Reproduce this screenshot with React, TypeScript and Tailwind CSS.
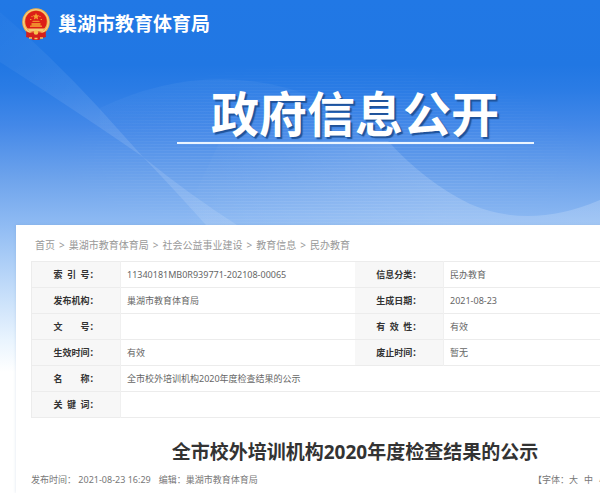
type InfoCell = {
  label: string;
  value: string;
};

// full-width colon
const COLON = "\uff1a";

const breadcrumbs = ["首页", "巢湖市教育体育局", "社会公益事业建设", "教育信息", "民办教育"];

const infoRows: InfoCell[][] = [
  [
    { label: "索 引 号", value: "11340181MB0R939771-202108-00065" },
    { label: "信息分类", value: "民办教育" },
  ],
  [
    { label: "发布机构", value: "巢湖市教育体育局" },
    { label: "生成日期", value: "2021-08-23" },
  ],
  [
    { label: "文 号", value: "" },
    { label: "有 效 性", value: "有效" },
  ],
  [
    { label: "生效时间", value: "有效" },
    { label: "废止时间", value: "暂无" },
  ],
  [{ label: "名 称", value: "全市校外培训机构2020年度检查结果的公示" }],
  [{ label: "关 键 词", value: "" }],
];

const Emblem = () => (
  <svg aria-hidden="true" className="h-8 w-7" viewBox="0 0 28 32">
    <path d="M5 23h18l1 6-4 1-3 2h-6l-3-2-4-1Z" fill="#d4201c" />
    <circle cx="14" cy="14" fill="#f3b04a" r="13.8" />
    <circle cx="14" cy="14" fill="none" r="12.4" stroke="#f8d48c" />
    <circle cx="14" cy="13.5" fill="#dc1f17" r="10.8" />
    <path d="m14 5 1 2.2 2.4.3-1.8 1.6.5 2.4-2.1-1.2-2.1 1.2.5-2.4-1.8-1.6 2.4-.3Z" fill="#f6a032" />
    <path d="M8 11.5h1.4M18.6 11.5H20M9.4 8.6h1.2M17.4 8.6h1.2" stroke="#f6a032" />
    <path d="M8 17.5h1.5V15h9v2.5H20V19H8ZM10 14l1-1.3h6l1 1.3Z" fill="#f08a2c" />
    <path d="M5.5 20.5h17l-2 3h-13Z" fill="#f6c872" />
    <path d="M4 23c3 3 6 1 10 1s7 2 10-1l-1 6c-4 1-6-1-9-1s-5 2-9 1Z" fill="#d4201c" />
    <circle cx="14" cy="24.5" fill="#f6c24c" r="2.3" />
    <path d="M7 30h3M12.5 30.5h3M18 30h3" stroke="#f7c65a" strokeWidth="1.6" />
  </svg>
);

const BannerArt = () => (
  <svg
    aria-hidden="true"
    className="absolute inset-0 h-full w-full"
    preserveAspectRatio="xMinYMin slice"
    viewBox="0 0 710 225"
  >
    <defs>
      <pattern height="3" id="lines" patternUnits="userSpaceOnUse" width="8">
        <path d="M0 .5h8" stroke="#fff" strokeOpacity=".07" />
      </pattern>
      <radialGradient id="fade">
        <stop offset=".5" stopColor="#fff" />
        <stop offset="1" stopColor="#000" />
      </radialGradient>
      <mask id="linesMask">
        <ellipse cx="330" cy="160" fill="url(#fade)" rx="270" ry="100" />
      </mask>
      <linearGradient id="wave" x1="0" x2="1" y1="0" y2="0">
        <stop offset="0" stopColor="#fff" stopOpacity="0" />
        <stop offset=".5" stopColor="#fff" stopOpacity=".16" />
        <stop offset="1" stopColor="#fff" stopOpacity=".2" />
      </linearGradient>
      <linearGradient id="arc" x1="0" x2="0" y1="0" y2="1">
        <stop offset="0" stopColor="#fff" stopOpacity=".05" />
        <stop offset="1" stopColor="#fff" stopOpacity="0" />
      </linearGradient>
      <linearGradient id="beam" x1="0" x2="1" y1="0" y2="1">
        <stop offset="0" stopColor="#fff" stopOpacity=".02" />
        <stop offset=".6" stopColor="#fff" stopOpacity=".12" />
        <stop offset="1" stopColor="#fff" stopOpacity=".12" />
      </linearGradient>
    </defs>
    <path d="M0 60H710V225H0Z" fill="url(#lines)" mask="url(#linesMask)" />
    <path d="M100 108Q200 60 300 92Q350 108 388 141H100Z" fill="url(#arc)" />
    <path d="M0 12Q50 55 98 107L143 157Q190 195 237 225H206Q170 185 143 157Q90 120 0 62Z" fill="url(#beam)" />
    <path
      d="M220 141H388Q425 182 470 204Q530 230 600 200Q660 175 710 130V225H180Z"
      fill="url(#wave)"
    />
  </svg>
);

const App = () => {
  return (
    <div className="flex min-h-screen flex-col overflow-hidden bg-white bg-[linear-gradient(to_bottom,#2178e5_0px,#2177e3_65px,#2b7ce5_90px,#4388e8_125px,#6fa4ec_180px,#8fbbf3_225px,#bfdaf9_285px,#e9f4fe_340px,#ffffff_372px)] bg-no-repeat font-['Noto_Sans','Noto_Sans_CJK_SC',sans-serif]">
      <div className="flex min-w-[710px] flex-1 flex-col">
        <header className="relative h-[225px]">
          <BannerArt />
          <div className="relative flex items-center gap-2 px-[22px] pt-2 text-white">
            <Emblem />
            <span className="text-[19px] leading-8 font-bold">巢湖市教育体育局</span>
          </div>
          <div className="relative mx-auto mt-11 w-[357px] border-b-2 border-[#eaf4ff] text-center">
            <h1 className="pb-1 font-['Noto_Sans_CJK_SC',sans-serif] text-[48px] leading-[54px] font-bold whitespace-nowrap text-white [text-shadow:2px_2px_1px_#1f5299]">
              政府信息公开
            </h1>
          </div>
        </header>

        <main className="mx-4 flex-1 bg-white px-[15px] pb-1 shadow-[0_0_3px_rgba(80,120,170,0.2)]">
          <nav aria-label="当前位置" className="px-1 pt-3">
            <ol className="flex text-[10px] leading-4 text-[#999]">
              {breadcrumbs.map((item, index) => (
                <li key={item}>
                  {index > 0 && <span className="px-1">&gt;</span>}
                  <a href="#">{item}</a>
                </li>
              ))}
            </ol>
          </nav>

          <table className="mt-2 w-full table-fixed border-collapse border border-[#ececec] text-[9px] leading-4 text-[#666]">
            <colgroup>
              <col className="w-[89px]" />
              <col className="w-[234px]" />
              <col className="w-[89px]" />
              <col />
            </colgroup>
            <tbody>
              {infoRows.map((row) => (
                <tr className="h-[26px] border-b border-[#ececec]" key={row[0].label}>
                  {row.map((cell) => [
                    <th
                      className="border-r border-[#f0f0f0] bg-[#f7f7f7] font-bold whitespace-nowrap text-[#333]"
                      key={cell.label}
                      scope="row"
                    >
                      <span className="inline-block w-9 [text-align-last:justify]">
                        {cell.label}
                      </span>
                      {COLON}
                    </th>,
                    <td
                      className="px-1.5"
                      colSpan={row.length === 1 ? 3 : 1}
                      key={`${cell.label}-value`}
                    >
                      {cell.value}
                    </td>,
                  ])}
                </tr>
              ))}
            </tbody>
          </table>

          <article>
            <h2 className="mt-[22px] text-center text-[19px] leading-6 font-bold text-[#333]">
              全市校外培训机构2020年度检查结果的公示
            </h2>
            <div className="mt-2 flex items-center gap-2 text-[9px] leading-4 text-[#777]">
              <span>发布时间{COLON} 2021-08-23 16:29</span>
              <span>编辑{COLON}巢湖市教育体育局</span>
              <div className="mr-[62px] ml-auto flex">
                <span>【字体{COLON}</span>
                <div className="flex gap-1.5">
                  <button type="button">大</button>
                  <button type="button">中</button>
                  <button type="button">小</button>
                </div>
                <span>】</span>
              </div>
            </div>
          </article>
        </main>
      </div>
    </div>
  );
};

export default App;
